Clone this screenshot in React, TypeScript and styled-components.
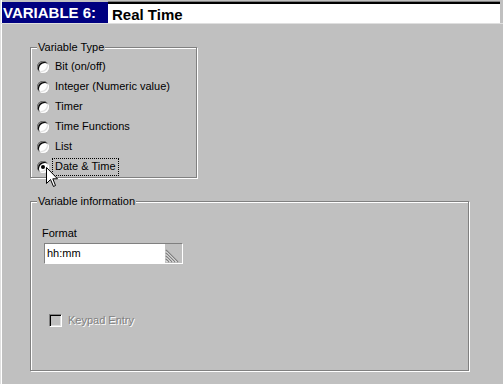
import styled, { createGlobalStyle } from 'styled-components';

const GlobalStyle = createGlobalStyle`
    body { margin: 0; background: #c0c0c0; }
    * { box-sizing: border-box; }
`;

const types = ['Bit (on/off)', 'Integer (Numeric value)', 'Timer', 'Time Functions', 'List', 'Date & Time'];
const SELECTED = 5;

function App() {
    return (
        <Window>
            <GlobalStyle />
            <Header>
                <VarLabel>VARIABLE 6:</VarLabel>
                <NameField>Real Time</NameField>
            </Header>
            <Body>
                <Group $width={167} $height={137}>
                    <Legend>Variable Type</Legend>
                    <RadioList>
                        {types.map((t, i) => (
                            <RadioRow key={t}>
                                <Radio $checked={i === SELECTED} />
                                <RadioText $focused={i === SELECTED}>{t}</RadioText>
                            </RadioRow>
                        ))}
                    </RadioList>
                </Group>
                <Group $width={439} $height={176} $gap={17}>
                    <Legend>Variable information</Legend>
                    <FieldLabel>Format</FieldLabel>
                    <FormatBox>
                        <FormatText>hh:mm</FormatText>
                        <Grip>
                            <svg width="17" height="19" viewBox="0 0 17 19">
                                {[0, 3, 6, 9].map((o) => (
                                    <g key={o}>
                                        <line x1="1" y1={6 + o} x2={13 - o} y2="18" stroke="#808080" strokeWidth="1.2" />
                                        <line x1="1" y1={7.5 + o} x2={11.5 - o} y2="18" stroke="#ffffff" strokeWidth="1" />
                                    </g>
                                ))}
                            </svg>
                        </Grip>
                    </FormatBox>
                    <CheckRow>
                        <CheckBox />
                        <DisabledText>Keypad Entry</DisabledText>
                    </CheckRow>
                </Group>
            </Body>
            <Cursor width="13" height="21" viewBox="0 0 13 21">
                <path d="M0.5 0.5 L0.5 16.5 L4.5 12.5 L7.5 19.5 L9.5 18.5 L6.8 11.8 L11.5 11.8 Z" fill="#fff" stroke="#000" strokeWidth="1" />
            </Cursor>
        </Window>
    );
}

const Window = styled.div`
    width: 503px;
    height: 384px;
    position: relative;
    overflow: hidden;
    background: #c0c0c0;
    border-left: 1px solid #dfdfdf;
    box-shadow: inset 1px 0 0 #ffffff;
    font-family: "Liberation Sans", Arial, sans-serif;
    font-size: 11px;
    color: #000;
`;
const Header = styled.div`
    display: flex;
    margin-top: 1px;
    height: 23px;
    padding-left: 1px;
    border-bottom: 1px solid #dfdfdf;
`;
const VarLabel = styled.div`
    width: 106px;
    margin-top: 1px;
    padding-left: 1px;
    background: #000080;
    color: #fff;
    font-size: 15px;
    font-weight: bold;
    line-height: 22px;
    white-space: nowrap;
`;
const NameField = styled.div`
    flex: 1;
    margin-right: 3px;
    background: #fff;
    border-top: 1px solid #808080;
    box-shadow: inset 0 2px 0 #000;
    padding: 3px 0 0 4px;
    font-size: 15px;
    font-weight: bold;
    line-height: 19px;
`;
const Body = styled.div`
    display: flex;
    flex-direction: column;
    padding: 17px 0 0 29px;
`;
const Group = styled.fieldset<{ $width: number; $height: number; $gap?: number }>`
    margin: ${(p) => p.$gap ?? 0}px 0 0 0;
    padding: 0;
    width: ${(p) => p.$width}px;
    height: ${(p) => p.$height}px;
    border: 1px solid #808080;
    box-shadow: 1px 1px 0 #fff, inset 1px 1px 0 #fff;
    min-inline-size: 0;
`;
const Legend = styled.legend`
    margin-left: 6px;
    padding: 0 1px;
    background: #c0c0c0;
    line-height: 13px;
`;
const RadioList = styled.div`
    display: flex;
    flex-direction: column;
    padding: 3px 0 0 6px;
`;
const RadioRow = styled.div`
    display: flex;
    align-items: center;
    height: 20px;
`;
const Radio = styled.span<{ $checked: boolean }>`
    width: 12px;
    height: 12px;
    border-radius: 50%;
    background: #fff;
    flex: none;
    position: relative;
    box-shadow: inset 1px 1px 0 #808080, inset -1px -1px 0 #fff, inset 2px 2px 0 #000, inset -2px -2px 0 #dfdfdf;
    &::after {
        content: '';
        display: ${(p) => (p.$checked ? 'block' : 'none')};
        position: absolute;
        left: 4px;
        top: 4px;
        width: 4px;
        height: 4px;
        border-radius: 50%;
        background: #000;
    }
`;
const RadioText = styled.span<{ $focused: boolean }>`
    margin-left: 3px;
    padding: 1px 2px 2px 2px;
    border: 1px dotted ${(p) => (p.$focused ? '#000' : 'transparent')};
    line-height: 13px;
    white-space: nowrap;
`;
const FieldLabel = styled.div`
    margin: 19px 0 0 11px;
    line-height: 13px;
`;
const FormatBox = styled.div`
    display: flex;
    width: 139px;
    height: 21px;
    margin: 3px 0 0 13px;
    border-top: 1px solid #808080;
    border-left: 1px solid #808080;
    border-right: 1px solid #fff;
    border-bottom: 1px solid #fff;
    box-shadow: inset 1px 1px 0 #000;
`;
const FormatText = styled.div`
    width: 120px;
    background: #fff;
    padding: 3px 0 0 2px;
    line-height: 13px;
`;
const Grip = styled.div`
    flex: 1;
    background: #c0c0c0;
    display: flex;
    align-items: flex-end;
`;
const CheckRow = styled.div`
    display: flex;
    align-items: center;
    margin: 50px 0 0 18px;
`;
const CheckBox = styled.span`
    width: 13px;
    height: 13px;
    flex: none;
    background: #c0c0c0;
    border-top: 1px solid #808080;
    border-left: 1px solid #808080;
    border-right: 1px solid #fff;
    border-bottom: 1px solid #fff;
    box-shadow: inset 1px 1px 0 #000, inset -1px -1px 0 #dfdfdf;
`;
const DisabledText = styled.span`
    margin-left: 6px;
    color: #808080;
    text-shadow: 1px 1px 0 #fff;
    line-height: 13px;
`;
const Cursor = styled.svg`
    position: absolute;
    left: 45px;
    top: 167px;
`;

export default App;
